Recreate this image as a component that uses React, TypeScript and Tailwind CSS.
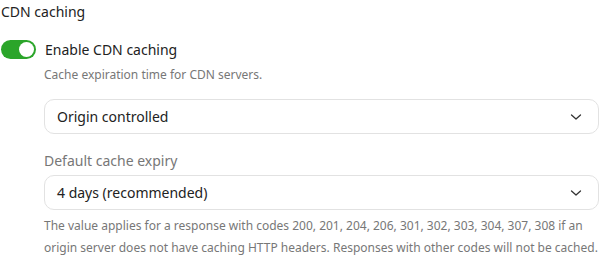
function Chevron() {
  return (
    <svg width="12" height="12" viewBox="0 0 12 12" fill="none" className="text-[#333]">
      <path d="M1.5 4l4.5 4 4.5-4" stroke="currentColor" strokeWidth="1.3" strokeLinecap="round" strokeLinejoin="round" />
    </svg>
  )
}

function Select({ value }: { value: string }) {
  return (
    <div className="flex h-[35px] items-center justify-between rounded-[10px] border border-[#e2e2e2] bg-white pl-3 pr-[16px]">
      <span className="text-[14px] text-[#222]">{value}</span>
      <Chevron />
    </div>
  )
}

export default function App() {
  return (
    <div className="w-[599px] h-[259px] bg-white font-['Noto_Sans',sans-serif] text-[#222]">
      <div className="pt-[1px] pl-[1px] text-[14px] leading-[22px]">CDN caching</div>
      <div className="mt-[16px] flex items-center gap-[9px] pl-[1px]">
        <div className="flex h-[19px] w-[35px] items-center justify-end rounded-full bg-[#2ba52a] pr-[2px]">
          <div className="size-[15px] rounded-full bg-white" />
        </div>
        <span className="text-[14px]">Enable CDN caching</span>
      </div>
      <div className="pl-[44px]">
        <p className="mt-[6px] text-[12px] text-[#777]">Cache expiration time for CDN servers.</p>
        <div className="mt-[15px]">
          <Select value="Origin controlled" />
        </div>
        <p className="mt-[16px] text-[14px] text-[#777]">Default cache expiry</p>
        <div className="mt-[4px]">
          <Select value="4 days (recommended)" />
        </div>
        <p className="mt-[5px] text-[12px] leading-[22px] text-[#777]">
          The value applies for a response with codes 200, 201, 204, 206, 301, 302, 303, 304, 307, 308 if an origin server does not have caching HTTP headers. Responses with other codes will not be cached.
        </p>
      </div>
    </div>
  )
}
